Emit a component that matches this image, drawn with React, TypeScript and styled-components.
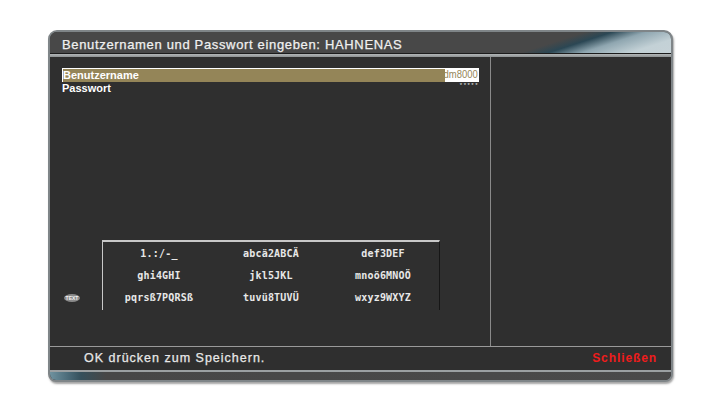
import React from "react";
import styled, { createGlobalStyle } from "styled-components";

const Global = createGlobalStyle`
  html, body { margin: 0; padding: 0; background: #fff; }
  body { width: 720px; height: 405px; overflow: hidden; font-family: "Liberation Sans", Arial, sans-serif; }
`;

const Page = styled.div`
  box-sizing: border-box;
  width: 720px;
  height: 405px;
  padding: 30px 47px 23px 48px;
`;

const Frame = styled.div`
  box-sizing: border-box;
  height: 352px;
  display: flex;
  flex-direction: column;
  border: 2px solid #7f8588;
  border-radius: 9px 9px 8px 8px;
  background: #2f2f2f;
  overflow: hidden;
  box-shadow: 1px 2px 2px rgba(90, 90, 90, 0.55);
`;

const TitleBar = styled.div`
  box-sizing: border-box;
  height: 22px;
  flex: none;
  display: flex;
  align-items: center;
  padding: 3px 0 0 12px;
  background: linear-gradient(162deg, #484848 0%, #484848 78%, #2b4754 82%, #8fa6b0 87%, #c3d1d6 94%, #c6d2d7 100%);
  border-bottom: 1px solid #1c1c1c;
  color: #f0f0f0;
  font-size: 13px;
  letter-spacing: 0.66px;
  -webkit-text-stroke: 0.25px #f0f0f0;
  white-space: nowrap;
`;

const TitleRule = styled.div`
  height: 3px;
  flex: none;
  background: linear-gradient(#b4b8b9, #8d9192);
`;

const Main = styled.div`
  flex: 1;
  min-height: 0;
  display: flex;
`;

const LeftPane = styled.div`
  box-sizing: border-box;
  width: 441px;
  flex: none;
  display: flex;
  flex-direction: column;
  padding: 11px 11px 36px 12px;
  border-right: 1px solid #8a8a8a;
`;

const RightPane = styled.div`
  flex: 1;
`;

const Row = styled.div<{ $selected?: boolean }>`
  box-sizing: border-box;
  height: 14px;
  flex: none;
  display: flex;
  align-items: flex-start;
  justify-content: space-between;
  color: #fff;
  font-size: 11px;
  line-height: 12px;
  font-weight: 700;
  background: ${(p) => (p.$selected ? "#948558" : "transparent")};
  border-top: ${(p) => (p.$selected ? "1px solid #fff" : "0")};
  border-left: ${(p) => (p.$selected ? "1px solid #fff" : "0")};
`;

const RowLabel = styled.span`
  letter-spacing: 0;
`;

const UserValue = styled.span`
  box-sizing: border-box;
  width: 34px;
  height: 13px;
  padding-right: 1px;
  display: flex;
  justify-content: flex-end;
  background: #fff;
`;

const UserValueText = styled.span`
  flex: none;
  transform: scaleX(0.86);
  transform-origin: right center;
  color: #948558;
  font-size: 11px;
  line-height: 11px;
  font-weight: 400;
`;

const PasswordValue = styled.span`
  margin-top: 1px;
  color: #e6e6e6;
  font-size: 6px;
  line-height: 4px;
  font-weight: 400;
  letter-spacing: 1.5px;
`;

const KeyboardArea = styled.div`
  margin-top: auto;
  display: flex;
  align-items: flex-end;
`;

const TextIcon = styled.span`
  box-sizing: border-box;
  width: 16px;
  height: 8px;
  margin: 0 22px 8px 2px;
  flex: none;
  display: flex;
  align-items: center;
  justify-content: center;
  border-radius: 50%;
  background: #8a8a8a;
  color: #f2f2f2;
  font-size: 5px;
  line-height: 8px;
  font-weight: 700;
`;

const Keyboard = styled.div`
  box-sizing: border-box;
  width: 338px;
  height: 70px;
  display: grid;
  grid-template-columns: repeat(3, 1fr);
  grid-template-rows: repeat(3, 1fr);
  align-items: center;
  justify-items: center;
  padding: 0 0 1px;
  border-top: 2px solid #c8c8c8;
  border-left: 1px solid #c8c8c8;
  border-right: 1px solid #161616;
`;

const Key = styled.span`
  color: #e8e8e8;
  font-family: "DejaVu Sans Mono", monospace;
  font-size: 10px;
  font-weight: 700;
  letter-spacing: 0.2px;
  white-space: nowrap;
`;

const Footer = styled.div`
  box-sizing: border-box;
  height: 24px;
  flex: none;
  display: flex;
  align-items: center;
  justify-content: space-between;
  padding: 0 14px 1px 34px;
  border-top: 1px solid #9a9a9a;
  font-size: 12.5px;
`;

const Hint = styled.span`
  color: #e8e8e8;
  letter-spacing: 1px;
  -webkit-text-stroke: 0.25px #e8e8e8;
`;

const CloseLabel = styled.span`
  color: #f01c1c;
  font-size: 12px;
  font-weight: 700;
  letter-spacing: 0.9px;
`;

const BottomBar = styled.div`
  height: 8px;
  flex: none;
  border-top: 2px solid #9ba0a2;
  background: linear-gradient(90deg, #6f929f 0%, #4a6a78 3%, #35505c 5%, #474747 9%, #4a4a4a 100%);
`;

const keys = ["1.:/-_", "abcä2ABCÄ", "def3DEF", "ghi4GHI", "jkl5JKL", "mnoö6MNOÖ", "pqrsß7PQRSß", "tuvü8TUVÜ", "wxyz9WXYZ"];

export default function App() {
  return (
    <Page>
      <Global />
      <Frame>
        <TitleBar>Benutzernamen und Passwort eingeben: HAHNENAS</TitleBar>
        <TitleRule />
        <Main>
          <LeftPane>
            <Row $selected>
              <RowLabel>Benutzername</RowLabel>
              <UserValue>
                <UserValueText>dm8000</UserValueText>
              </UserValue>
            </Row>
            <Row>
              <RowLabel>Passwort</RowLabel>
              <PasswordValue>*****</PasswordValue>
            </Row>
            <KeyboardArea>
              <TextIcon>TEXT</TextIcon>
              <Keyboard>
                {keys.map((k) => (
                  <Key key={k}>{k}</Key>
                ))}
              </Keyboard>
            </KeyboardArea>
          </LeftPane>
          <RightPane />
        </Main>
        <Footer>
          <Hint>OK drücken zum Speichern.</Hint>
          <CloseLabel>Schließen</CloseLabel>
        </Footer>
        <BottomBar />
      </Frame>
    </Page>
  );
}
